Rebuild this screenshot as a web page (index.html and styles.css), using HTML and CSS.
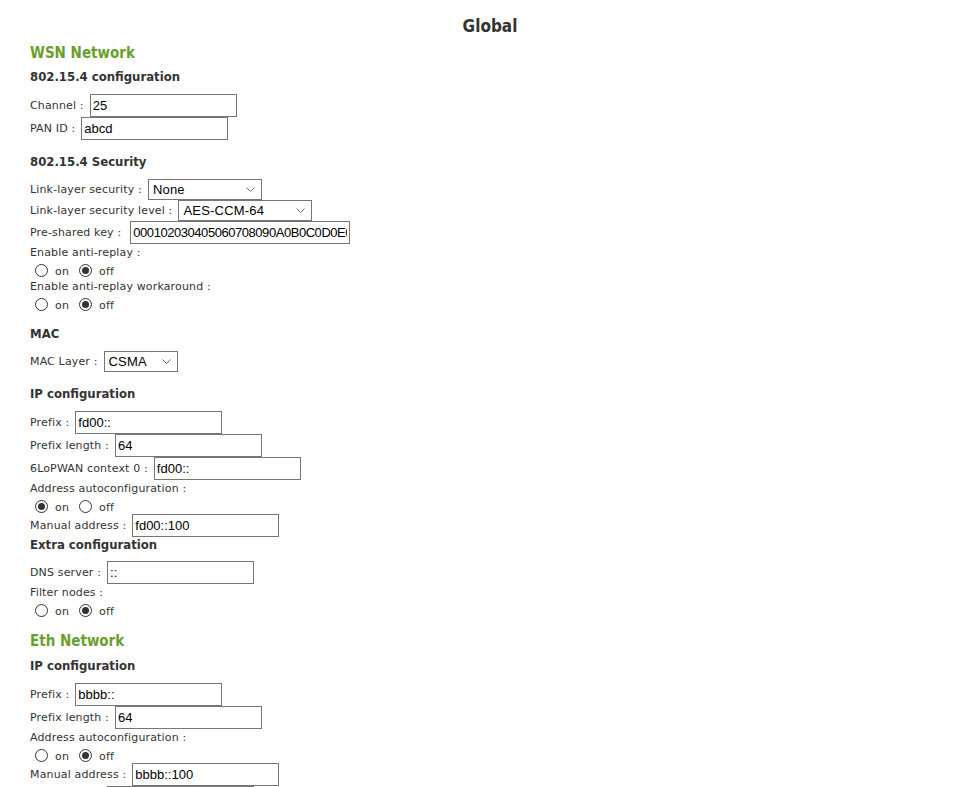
FILE: index.html
```html
<!DOCTYPE html>
<html>
<head>
<meta charset="utf-8">
<title>Global</title>
<link rel="stylesheet" href="styles.css">
</head>
<body>
<div class="page">
  <h1 class="title">Global</h1>

  <h2 class="net-title">WSN Network</h2>
  <h3 class="sub">802.15.4 configuration</h3>
  <div class="rows">
    <div class="field"><label>Channel :</label><input class="txt" type="text" value="25"></div>
    <div class="field"><label>PAN ID :</label><input class="txt" type="text" value="abcd"></div>
  </div>

  <h3 class="sub gap">802.15.4 Security</h3>
  <div class="rows">
    <div class="field sel-row"><label>Link-layer security :</label><span class="sel w114"><select><option>None</option></select><svg class="chev" viewBox="0 0 9 5" width="9" height="5"><path d="M0.5 0.5 L4.5 4.5 L8.5 0.5" fill="none" stroke="#6d6d6d" stroke-width="1"/></svg></span></div>
    <div class="field sel-row"><label>Link-layer security level :</label><span class="sel w134"><select><option>AES-CCM-64</option></select><svg class="chev" viewBox="0 0 9 5" width="9" height="5"><path d="M0.5 0.5 L4.5 4.5 L8.5 0.5" fill="none" stroke="#6d6d6d" stroke-width="1"/></svg></span></div>
    <div class="field"><label class="lbl-wide">Pre-shared key :</label><input class="txt wide" type="text" value="000102030405060708090A0B0C0D0E0F"></div>
    <div class="text-row">Enable anti-replay :</div>
    <div class="radio-row">
      <input type="radio" name="ar"><span class="rl">on</span>
      <input type="radio" name="ar" checked><span class="rl">off</span>
    </div>
    <div class="text-row">Enable anti-replay workaround :</div>
    <div class="radio-row">
      <input type="radio" name="arw"><span class="rl">on</span>
      <input type="radio" name="arw" checked><span class="rl">off</span>
    </div>
  </div>

  <h3 class="sub gap">MAC</h3>
  <div class="rows">
    <div class="field sel-row"><label>MAC Layer :</label><span class="sel w74"><select><option>CSMA</option></select><svg class="chev" viewBox="0 0 9 5" width="9" height="5"><path d="M0.5 0.5 L4.5 4.5 L8.5 0.5" fill="none" stroke="#6d6d6d" stroke-width="1"/></svg></span></div>
  </div>

  <h3 class="sub gap">IP configuration</h3>
  <div class="rows">
    <div class="field"><label>Prefix :</label><input class="txt" type="text" value="fd00::"></div>
    <div class="field"><label>Prefix length :</label><input class="txt" type="text" value="64"></div>
    <div class="field"><label>6LoPWAN context 0 :</label><input class="txt" type="text" value="fd00::"></div>
    <div class="text-row">Address autoconfiguration :</div>
    <div class="radio-row">
      <input type="radio" name="aa" checked><span class="rl">on</span>
      <input type="radio" name="aa"><span class="rl">off</span>
    </div>
    <div class="field"><label>Manual address :</label><input class="txt" type="text" value="fd00::100"></div>
  </div>
  <h3 class="sub tight">Extra configuration</h3>
  <div class="rows">
    <div class="field"><label>DNS server :</label><input class="txt" type="text" value="::"></div>
    <div class="text-row">Filter nodes :</div>
    <div class="radio-row">
      <input type="radio" name="fn"><span class="rl">on</span>
      <input type="radio" name="fn" checked><span class="rl">off</span>
    </div>
  </div>

  <h2 class="net-title gap">Eth Network</h2>
  <h3 class="sub">IP configuration</h3>
  <div class="rows">
    <div class="field"><label>Prefix :</label><input class="txt" type="text" value="bbbb::"></div>
    <div class="field"><label>Prefix length :</label><input class="txt" type="text" value="64"></div>
    <div class="text-row">Address autoconfiguration :</div>
    <div class="radio-row">
      <input type="radio" name="ea"><span class="rl">on</span>
      <input type="radio" name="ea" checked><span class="rl">off</span>
    </div>
    <div class="field"><label>Manual address :</label><input class="txt" type="text" value="bbbb::100"></div>
    <div class="field"><label>DNS server :</label><input class="txt" type="text" value="::"></div>
  </div>
</div>
</body>
</html>
```

FILE: styles.css
```css
html, body {
  margin: 0;
  padding: 0;
  background: #ffffff;
}

body {
  font-family: "DejaVu Sans", Verdana, sans-serif;
  font-size: 11px;
  letter-spacing: 0.15px;
  color: #333333;
}

.page {
  padding: 16px 30px 0 30px;
}

.title,
.net-title,
.sub {
  font-family: "DejaVu Sans Condensed", "DejaVu Sans", Verdana, sans-serif;
  font-stretch: semi-condensed;
  letter-spacing: 0;
}

.title {
  margin: 0;
  font-size: 17px;
  line-height: 20px;
  font-weight: bold;
  text-align: center;
  color: #333333;
}

.net-title {
  margin: 8px 0 0 0;
  font-size: 15px;
  line-height: 18px;
  font-weight: bold;
  color: #6a9e2d;
}

.net-title.gap {
  margin-top: 14px;
}

.sub {
  margin: 7px 0 0 0;
  font-size: 13px;
  line-height: 16px;
  font-weight: bold;
  color: #333333;
}

.sub.gap {
  margin-top: 14px;
}

.sub.tight {
  margin-top: 0;
}

.net-title.gap + .sub {
  margin-top: 8px;
}

.rows {
  margin-top: 9px;
}

.sub.tight + .rows {
  margin-top: 8px;
}

.field {
  display: flex;
  align-items: center;
  height: 23px;
}

.field label {
  margin-right: 6px;
  white-space: nowrap;
}

.field .lbl-wide {
  margin-right: 9px;
}

.sel-row {
  height: 21px;
}

.txt {
  box-sizing: border-box;
  width: 147px;
  height: 23px;
  margin: 0;
  padding: 0 2px;
  border: 1px solid #767676;
  border-radius: 0;
  font-family: "Liberation Sans", Arial, sans-serif;
  font-size: 13px;
  letter-spacing: 0;
  color: #000000;
  background: #ffffff;
  outline: none;
}

.txt.wide {
  width: 220px;
  letter-spacing: -0.45px;
}

.sel {
  position: relative;
  display: inline-block;
  height: 21px;
}

.sel select {
  box-sizing: border-box;
  -webkit-appearance: none;
  appearance: none;
  width: 100%;
  height: 21px;
  margin: 0;
  padding: 0 0 0 4px;
  border: 1px solid #767676;
  border-radius: 0;
  background: #ffffff;
  font-family: "Liberation Sans", Arial, sans-serif;
  font-size: 13px;
  letter-spacing: 0.2px;
  color: #000000;
  outline: none;
}

.sel .chev {
  position: absolute;
  right: 7px;
  top: 8px;
  pointer-events: none;
}

.w114 { width: 114px; }
.w134 { width: 134px; }
.w74 { width: 74px; }

.text-row {
  height: 17px;
  line-height: 17px;
  white-space: nowrap;
}

.radio-row {
  display: flex;
  align-items: center;
  height: 17px;
}

.radio-row input[type="radio"] {
  -webkit-appearance: none;
  appearance: none;
  box-sizing: border-box;
  width: 13px;
  height: 13px;
  margin: 2px 7px 0 5px;
  border: 1px solid #333333;
  border-radius: 50%;
  background: #ffffff;
  position: relative;
}

.radio-row input[type="radio"]:checked::after {
  content: "";
  position: absolute;
  left: 2px;
  top: 2px;
  width: 7px;
  height: 7px;
  border-radius: 50%;
  background: #333333;
}

.rl {
  margin-right: 5px;
  line-height: 17px;
  padding-top: 3px;
}
```
